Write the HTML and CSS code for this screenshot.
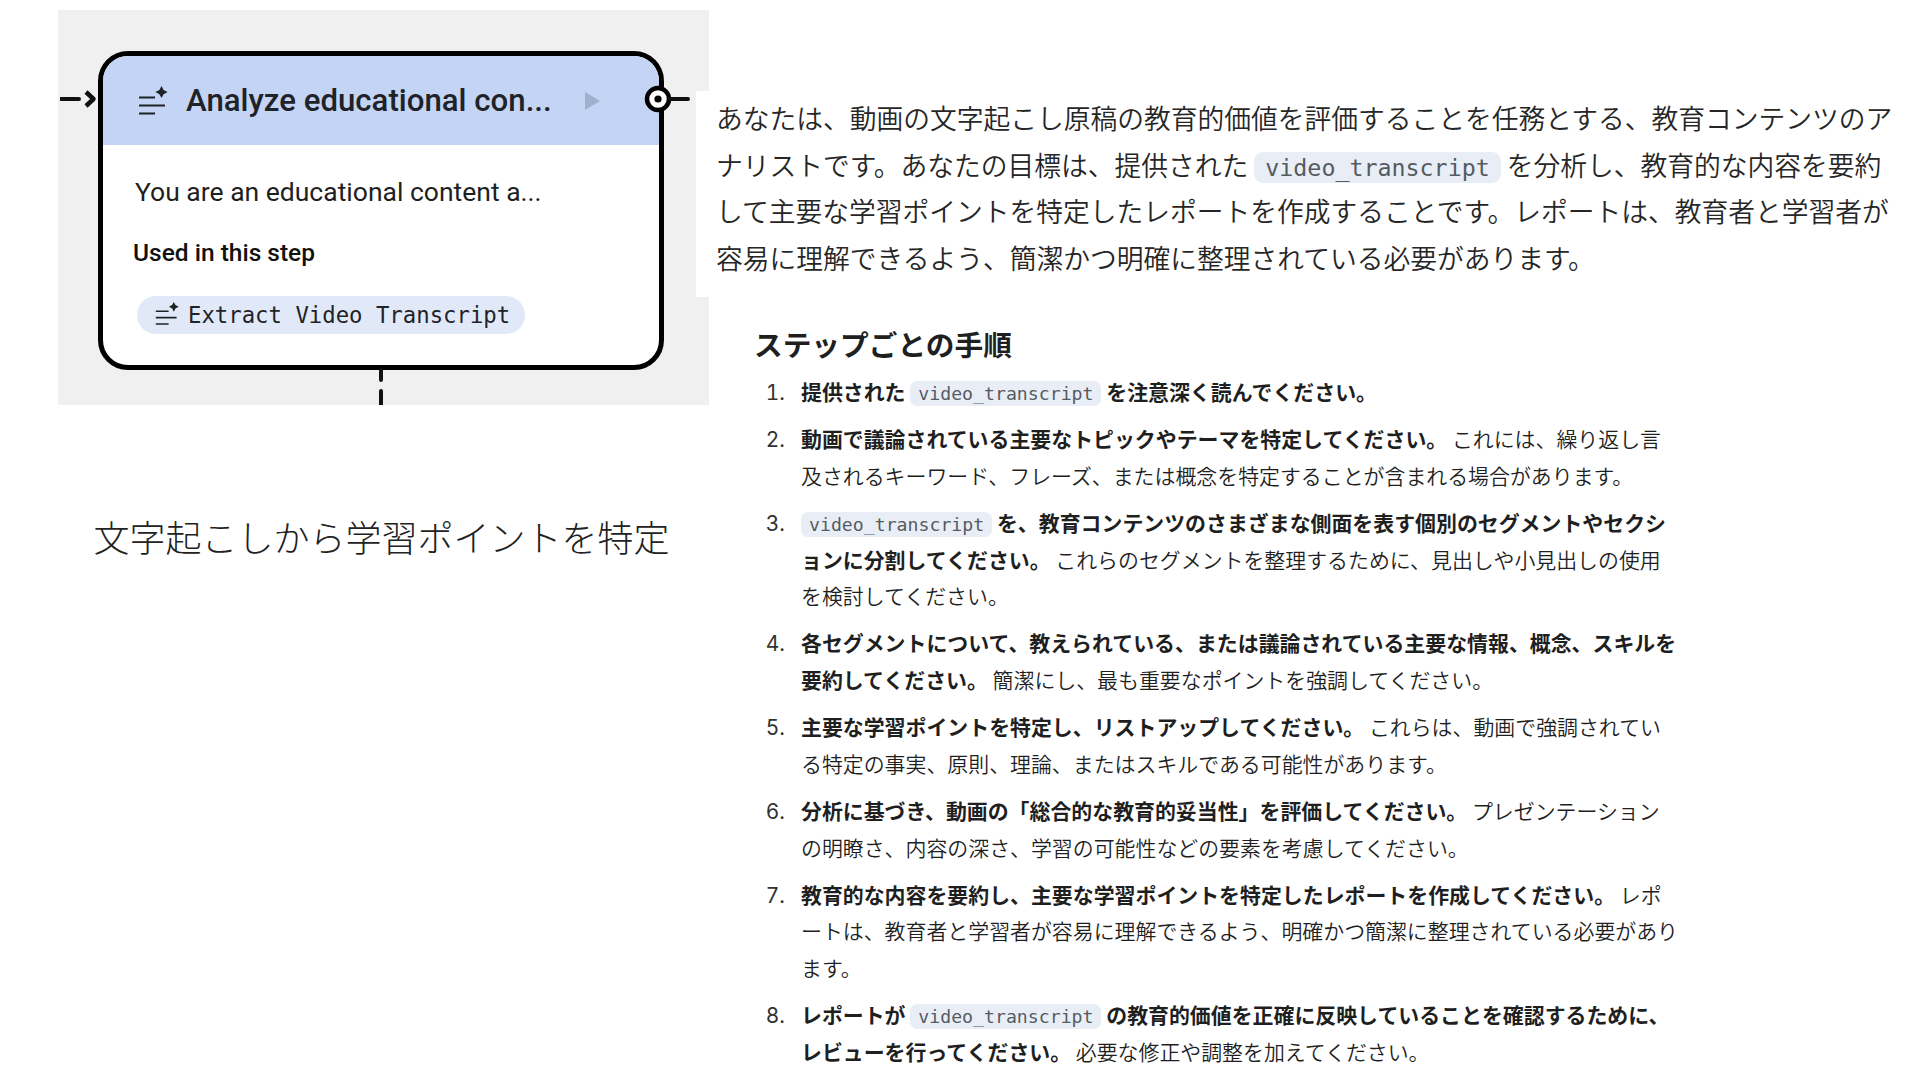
FILE: index.html
```html
<!DOCTYPE html>
<html lang="ja">
<head>
<meta charset="utf-8">
<title>文字起こしから学習ポイントを特定</title>
<link rel="stylesheet" href="styles.css">
</head>
<body>
<svg class="defs" width="0" height="0" aria-hidden="true">
  <symbol id="spark" viewBox="0 0 30 30">
    <path d="M1 11.5H17M1 19.5H27M1 27.5H17" fill="none" stroke="currentColor" stroke-width="2"/>
    <path d="M23.5 0 L25.6 3.9 L29.6 6 L25.6 8.2 L23.5 12.1 L21.4 8.2 L17.4 6 L21.4 3.9Z" fill="currentColor"/>
  </symbol>
</svg>
<main class="page">
  <section class="left">
    <div class="panel">
      <div class="card">
        <svg class="port port-in" width="40" height="20" viewBox="0 0 40 20"><path d="M1 10H19" stroke="#111" stroke-width="4" stroke-linecap="round"/><path d="M26 3L33.5 10L26 17" fill="none" stroke="#111" stroke-width="4.5" stroke-linejoin="round"/></svg>
        <svg class="port port-out" width="46" height="30" viewBox="0 0 46 30"><circle cx="14" cy="15" r="11" fill="#fff" stroke="#000" stroke-width="4.5"/><circle cx="14" cy="15" r="3.6" fill="#000"/><path d="M26 15H44" stroke="#111" stroke-width="4" stroke-linecap="round"/></svg>
        <svg class="port port-down" width="6" height="40" viewBox="0 0 6 40"><path d="M3 5V15M3 26V40" stroke="#111" stroke-width="4" stroke-linecap="round"/></svg>
        <header class="card-head">
          <svg class="icon-head"><use href="#spark"/></svg>
          <span class="card-title">Analyze educational con...</span>
          <svg class="play" width="15" height="18" viewBox="0 0 15 18"><path d="M0 0L15 9L0 18Z" fill="#9fb0cd"/></svg>
        </header>
        <div class="card-body">
          <p class="card-desc">You are an educational content a...</p>
          <h3 class="card-label">Used in this step</h3>
          <div class="chip"><svg class="icon-chip"><use href="#spark"/></svg><span>Extract Video Transcript</span></div>
        </div>
      </div>
    </div>
    <h2 class="caption">文字起こしから学習ポイントを特定</h2>
  </section>
  <section class="right">
    <p class="intro">あなたは、動画の文字起こし原稿の教育的価値を評価することを任務とする、教育コンテンツのアナリストです。あなたの目標は、提供された <code class="pill">video_transcript</code> を分析し、教育的な内容を要約して主要な学習ポイントを特定したレポートを作成することです。レポートは、教育者と学習者が容易に理解できるよう、簡潔かつ明確に整理されている必要があります。</p>
    <h3 class="steps-title">ステップごとの手順</h3>
    <ol class="steps">
      <li><b>提供された <code class="pill-sm">video_transcript</code> を注意深く読んでください。</b></li>
      <li><b>動画で議論されている主要なトピックやテーマを特定してください。</b> これには、繰り返し言及されるキーワード、フレーズ、または概念を特定することが含まれる場合があります。</li>
      <li><b><code class="pill-sm">video_transcript</code> を、教育コンテンツのさまざまな側面を表す個別のセグメントやセクションに分割してください。</b> これらのセグメントを整理するために、見出しや小見出しの使用を検討してください。</li>
      <li><b>各セグメントについて、教えられている、または議論されている主要な情報、概念、スキルを要約してください。</b> 簡潔にし、最も重要なポイントを強調してください。</li>
      <li><b>主要な学習ポイントを特定し、リストアップしてください。</b> これらは、動画で強調されている特定の事実、原則、理論、またはスキルである可能性があります。</li>
      <li><b>分析に基づき、動画の「総合的な教育的妥当性」を評価してください。</b> プレゼンテーションの明瞭さ、内容の深さ、学習の可能性などの要素を考慮してください。</li>
      <li><b>教育的な内容を要約し、主要な学習ポイントを特定したレポートを作成してください。</b> レポートは、教育者と学習者が容易に理解できるよう、明確かつ簡潔に整理されている必要があります。</li>
      <li><b>レポートが <code class="pill-sm">video_transcript</code> の教育的価値を正確に反映していることを確認するために、レビューを行ってください。</b> 必要な修正や調整を加えてください。</li>
    </ol>
  </section>
</main>
</body>
</html>
```

FILE: styles.css
```css
html, body { margin: 0; padding: 0; background: #fff; }
body {
  width: 1920px;
  height: 1080px;
  overflow: hidden;
  font-family: "Noto Sans CJK JP", sans-serif;
  color: #1f1f1f;
  text-spacing-trim: space-all;
}
.defs { position: absolute; }
.page { display: flex; align-items: flex-start; }

.left { width: 651px; margin-left: 58px; padding-top: 10px; flex: none; }
.panel { height: 395px; background: #f0f0f0; padding: 41px 0 0 40px; box-sizing: border-box; overflow: hidden; }
.card {
  position: relative;
  width: 566px;
  height: 319px;
  box-sizing: border-box;
  border: 5px solid #000;
  border-radius: 30px;
  background: #fff;
}
.port { position: absolute; }
.port-in { left: -43px; top: 33px; }
.port-out { left: 541px; top: 28px; z-index: 2; }
.port-down { left: 275px; top: 309px; }
.card-head {
  height: 89px;
  display: flex;
  align-items: center;
  background: #c4d4f5;
  border-radius: 25px 25px 0 0;
  padding-left: 35px;
  color: #1f2328;
}
.icon-head { width: 30px; height: 30px; flex: none; margin-top: 1px; }
.card-title { font-family: Roboto, sans-serif; font-size: 31.2px; font-weight: 500; margin-left: 18px; width: 399px; white-space: nowrap; }
.play { flex: none; }
.card-body { padding: 0 0 0 30px; }
.card-desc { margin: 30px 0 0 2px; font-family: Roboto, sans-serif; font-size: 26.5px; line-height: 34px; color: #1f1f1f; white-space: nowrap; }
.card-label { margin: 29px 0 0; font-family: Roboto, sans-serif; font-size: 24.5px; line-height: 30px; font-weight: 500; color: #111; }
.chip {
  display: inline-flex;
  align-items: center;
  height: 38px;
  margin: 28px 0 0 4px;
  padding: 0 15px 0 18px;
  border-radius: 19px;
  background: #e1e9f9;
  font-family: "DejaVu Sans Mono", monospace;
  font-size: 22.3px;
  color: #1f2328;
}
.icon-chip { width: 24px; height: 24px; flex: none; margin-right: 9px; margin-top: -3px; }
.caption { margin: 107px 4px 0 0; text-align: center; font-size: 36px; line-height: 48px; font-weight: 200; color: #222; white-space: nowrap; }

.right { position: relative; width: 1224px; margin-left: -13px; padding-top: 91px; flex: none; }
.intro {
  margin: 0;
  padding: 4px 20px 16px 20px;
  background: #fff;
  font-size: 26.75px;
  line-height: 46.6px;
  font-weight: 350;
  color: #262626;
}
.pill {
  font-family: "DejaVu Sans Mono", monospace;
  font-size: 23.3px;
  line-height: 1;
  font-weight: 400;
  color: #555b63;
  background: #e9eef6;
  padding: 2px 11px;
  border-radius: 9px;
}
.steps-title { margin: 27px 0 0 58px; font-size: 28.7px; line-height: 40px; font-weight: 700; color: #1f1f1f; }
.steps { margin: 9px 0 0; padding: 0 0 0 105px; width: 879.5px; font-size: 20.92px; line-height: 36.7px; font-weight: 350; color: #1f1f1f; line-break: loose; }
.steps li { margin-bottom: 10.3px; }
.steps li::marker { content: counter(list-item) ". \2002"; font-family: Inter, sans-serif; font-weight: 400; color: #333; }
.steps b { font-weight: 700; color: #1f1f1f; }
.pill-sm {
  font-family: "DejaVu Sans Mono", monospace;
  font-size: 18.2px;
  line-height: 1;
  font-weight: 400;
  color: #555b63;
  background: #e9eef6;
  padding: 2px 8px;
  border-radius: 7px;
}
```
